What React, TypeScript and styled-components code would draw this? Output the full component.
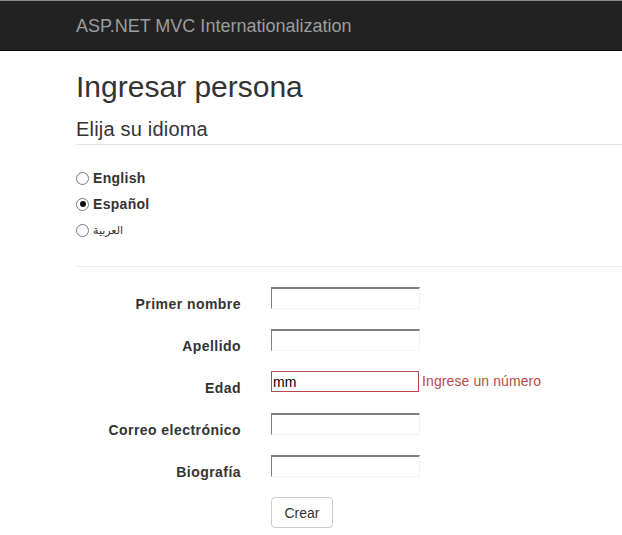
import React from 'react'
import styled, { createGlobalStyle } from 'styled-components'

const GlobalStyle = createGlobalStyle`
  html, body {
    margin: 0;
    padding: 0;
    background: #fff;
  }
  body {
    font-family: "Liberation Sans", Arial, sans-serif;
    font-size: 14px;
    color: #333;
  }
`

const fields = [
  { label: 'Primer nombre', value: '', error: '' },
  { label: 'Apellido', value: '', error: '' },
  { label: 'Edad', value: 'mm', error: 'Ingrese un número' },
  { label: 'Correo electrónico', value: '', error: '' },
  { label: 'Biografía', value: '', error: '' },
]

const languages = [
  { text: 'English', checked: false, arabic: false },
  { text: 'Español', checked: true, arabic: false },
  { text: 'العربية', checked: false, arabic: true },
]

const App = () => {
  return (
    <div>
      <GlobalStyle />
      <Navbar>
        <Brand>ASP.NET MVC Internationalization</Brand>
      </Navbar>
      <Container>
        <Title>Ingresar persona</Title>
        <SubTitle>Elija su idioma</SubTitle>
        <RadioList>
          {languages.map((el) => (
            <RadioRow key={el.text}>
              <Radio checked={el.checked} />
              <RadioLabel $arabic={el.arabic}>{el.text}</RadioLabel>
            </RadioRow>
          ))}
        </RadioList>
        <Divider />
        <Form>
          {fields.map((el) => (
            <FormRow key={el.label}>
              <Label>{el.label}</Label>
              <Input $error={!!el.error} defaultValue={el.value} />
              {el.error && <ErrorText>{el.error}</ErrorText>}
            </FormRow>
          ))}
          <ButtonRow>
            <Button>Crear</Button>
          </ButtonRow>
        </Form>
      </Container>
    </div>
  )
}

const Radio = ({ checked }: { checked: boolean }) => (
  <RadioCircle>{checked && <RadioDot />}</RadioCircle>
)

const Navbar = styled.div`
  height: 49px;
  background: #222;
  border-top: 1px solid #8a8a8a;
  border-bottom: 1px solid #080808;
  display: flex;
  align-items: center;
  padding-left: 76px;
`

const Brand = styled.div`
  font-size: 18px;
  color: #9d9d9d;
  line-height: 20px;
  margin-top: 1px;
`

const Container = styled.div`
  padding-left: 76px;
  overflow: hidden;
`

const Title = styled.h1`
  margin: 19px 0 0;
  font-size: 30px;
  font-weight: 400;
  line-height: 33px;
  color: #333;
`

const SubTitle = styled.h4`
  margin: 16px 0 0;
  font-size: 20px;
  letter-spacing: 0.2px;
  font-weight: 400;
  line-height: 20px;
  padding-bottom: 5px;
  border-bottom: 1px solid #e5e5e5;
  color: #333;
`

const RadioList = styled.div`
  display: flex;
  flex-direction: column;
  gap: 6px;
  margin-top: 23px;
`

const RadioRow = styled.div`
  display: flex;
  align-items: center;
  height: 20px;
`

const RadioCircle = styled.span`
  width: 11px;
  height: 11px;
  border: 1px solid #7a7a7a;
  border-radius: 50%;
  background: #fff;
  display: flex;
  align-items: center;
  justify-content: center;
  margin-right: 4px;
`

const RadioDot = styled.span`
  width: 6px;
  height: 6px;
  border-radius: 50%;
  background: #111;
`

const RadioLabel = styled.span<{ $arabic: boolean }>`
  font-size: ${(p) => (p.$arabic ? '11px' : '14px')};
  font-weight: ${(p) => (p.$arabic ? 400 : 700)};
  font-family: ${(p) => (p.$arabic ? '"DejaVu Sans", sans-serif' : 'inherit')};
  letter-spacing: ${(p) => (p.$arabic ? '0' : '0.3px')};
  color: #333;
`

const Divider = styled.div`
  border-top: 1px solid #eee;
  margin-top: 26px;
`

const Form = styled.div`
  display: flex;
  flex-direction: column;
  gap: 20px;
  margin-top: 20px;
`

const FormRow = styled.div`
  display: flex;
  align-items: flex-start;
  height: 22px;
`

const Label = styled.label`
  width: 165px;
  text-align: right;
  font-weight: 700;
  letter-spacing: 0.45px;
  line-height: 20px;
  padding-top: 7px;
  margin-right: 30px;
  white-space: nowrap;
`

const Input = styled.input<{ $error: boolean }>`
  box-sizing: border-box;
  width: ${(p) => (p.$error ? '148px' : '149px')};
  height: ${(p) => (p.$error ? '21px' : '22px')};
  margin: 0;
  padding: 0 1px;
  font-family: "Liberation Sans", Arial, sans-serif;
  font-size: 14px;
  color: #000;
  background: #fff;
  outline: none;
  border-style: solid;
  border-color: ${(p) =>
    p.$error ? '#b94a48' : '#808080 #f2f2f2 #f2f2f2 #808080'};
  border-width: ${(p) => (p.$error ? '1px' : '2px 1px 1px 1px')};
`

const ErrorText = styled.span`
  margin-left: 3px;
  line-height: 20px;
  font-size: 14px;
  letter-spacing: 0.1px;
  color: #b94a48;
`

const ButtonRow = styled.div`
  padding-left: 195px;
`

const Button = styled.button`
  box-sizing: border-box;
  width: 62px;
  height: 31px;
  border: 1px solid #ccc;
  border-radius: 4px;
  background: #fff;
  font-family: "Liberation Sans", Arial, sans-serif;
  font-size: 14px;
  color: #333;
  padding: 0;
`

export default App
